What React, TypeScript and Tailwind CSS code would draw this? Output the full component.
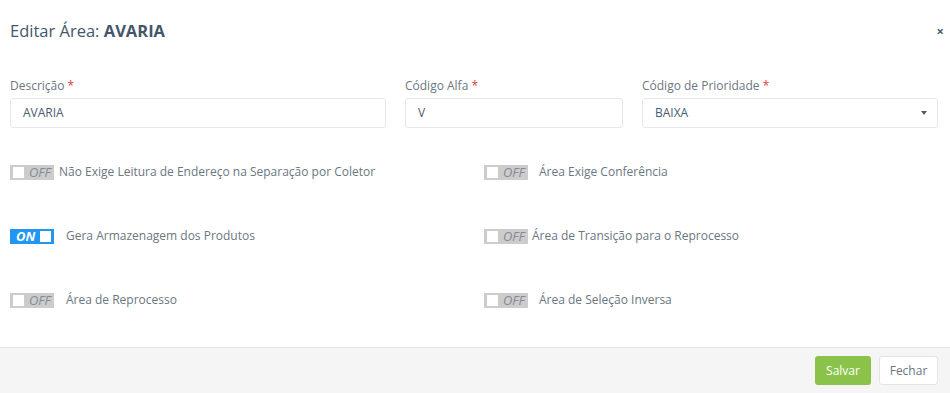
import React from 'react';

interface ToggleRow {
  left: { on: boolean; label: string; gap: string };
  right: { on: boolean; label: string; gap: string };
}

const Toggle = ({ on }: { on: boolean }) => {
  if (on) {
    return (
      <span className="flex h-[15px] w-[44px] shrink-0 items-center justify-between bg-[#2196f3] pl-[6px] pr-[3px]">
        <span className="text-[13px] font-bold italic leading-none text-white">ON</span>
        <span className="h-[11px] w-[11px] bg-white" />
      </span>
    );
  }
  return (
    <span className="flex h-[15px] w-[44px] shrink-0 items-center gap-[5px] bg-[#cccccc] pl-[3px]">
      <span className="h-[11px] w-[11px] bg-white" />
      <span className="text-[13px] italic leading-none text-[#858b93]">OFF</span>
    </span>
  );
};

const Field = ({ label, value, select }: { label: string; value: string; select?: boolean }) => (
  <div className="flex flex-col">
    <label className="mb-[4px] h-[17px] text-[12px] leading-[17px] text-[#6b7780]">
      {label} <span className="text-[#e53935]">*</span>
    </label>
    <div className="flex h-[30px] items-center justify-between rounded-[3px] border border-[#e6e9ec] px-[12px] text-[12px] text-[#4b5b6d]">
      <span>{value}</span>
      {select && <span className="mr-[-2px] h-0 w-0 border-x-[3px] border-t-[4px] border-x-transparent border-t-[#4b5b6d]" />}
    </div>
  </div>
);

export default function App() {
  const rows: ToggleRow[] = [
    {
      left: { on: false, label: 'Não Exige Leitura de Endereço na Separação por Coletor', gap: 'gap-[5px]' },
      right: { on: false, label: 'Área Exige Conferência', gap: 'gap-[11px]' },
    },
    {
      left: { on: true, label: 'Gera Armazenagem dos Produtos', gap: 'gap-[12px]' },
      right: { on: false, label: 'Área de Transição para o Reprocesso', gap: 'gap-[4px]' },
    },
    {
      left: { on: false, label: 'Área de Reprocesso', gap: 'gap-[12px]' },
      right: { on: false, label: 'Área de Seleção Inversa', gap: 'gap-[11px]' },
    },
  ];

  return (
    <div className="flex h-[393px] w-[950px] flex-col bg-white font-['Open_Sans',sans-serif]">
      <div className="flex h-[62px] items-center justify-between pl-[10px] pr-[6px]">
        <h4 className="text-[16.5px] text-[#44566c]">
          Editar Área: <span className="font-bold">AVARIA</span>
        </h4>
        <span className="text-[13px] font-bold leading-none text-[#4a5b70]">×</span>
      </div>

      <div className="grid grid-cols-[376px_218px_296px] gap-[19px] pl-[10px] pt-[15px]">
        <Field label="Descrição" value="AVARIA" />
        <Field label="Código Alfa" value="V" />
        <Field label="Código de Prioridade" value="BAIXA" select />
      </div>

      <div className="flex flex-col gap-[49px] pl-[10px] pt-[35px]">
        {rows.map((row, i) => (
          <div key={i} className="grid h-[15px] grid-cols-[474px_1fr] items-center">
            <div className={`flex items-center ${row.left.gap}`}>
              <Toggle on={row.left.on} />
              <span className="text-[12px] text-[#6b7780]">{row.left.label}</span>
            </div>
            <div className={`flex items-center ${row.right.gap}`}>
              <Toggle on={row.right.on} />
              <span className="text-[12px] text-[#6b7780]">{row.right.label}</span>
            </div>
          </div>
        ))}
      </div>

      <div className="mt-auto flex h-[46px] items-center justify-end gap-[8px] border-t border-[#e8e8e8] bg-[#f5f5f5] pr-[12px]">
        <button className="h-[29px] w-[56px] rounded-[3px] bg-[#8bc34a] text-[12px] text-white">Salvar</button>
        <button className="h-[29px] w-[59px] rounded-[3px] border border-[#e4e4e4] bg-white text-[12px] text-[#6b7780]">Fechar</button>
      </div>
    </div>
  );
}
